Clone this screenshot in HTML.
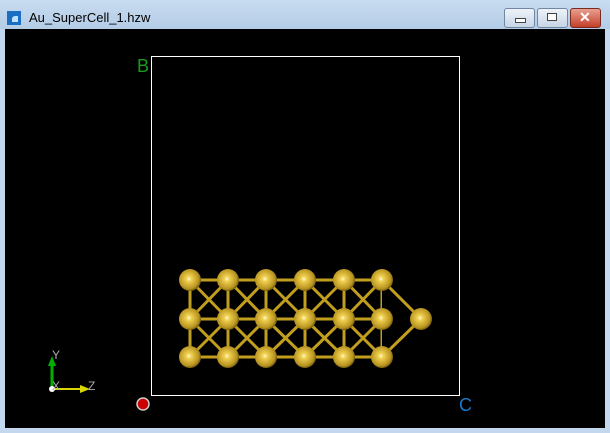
<!DOCTYPE html>
<html><head><style>
html,body{margin:0;padding:0;width:610px;height:433px;overflow:hidden;background:#c3d8ee;font-family:"Liberation Sans",sans-serif}
.tb{position:absolute;left:0;top:0;width:610px;height:29px;background:linear-gradient(#c9dcf0,#b3cce6)}
.btn{position:absolute;top:8px;height:18px;border:1px solid #6f87a3;border-radius:3px;background:linear-gradient(#eef3f9,#c6d5e6)}
</style></head><body>
<div class="tb">
<div style="position:absolute;left:7px;top:11px;width:14px;height:14px;background:#1b6ec2"><div style="position:absolute;left:5px;top:5px;width:6px;height:6px;border-radius:3px 0 0 0;background:#bfe0ff"></div></div>
<div style="position:absolute;left:29px;top:10px;font-size:13px;color:#000">Au_SuperCell_1.hzw</div>
<div class="btn" style="left:504px;width:29px"><div style="position:absolute;left:10px;top:9px;width:9px;height:3px;background:#fff;border:1px solid #444"></div></div>
<div class="btn" style="left:537px;width:29px"><div style="position:absolute;left:9px;top:4px;width:8px;height:6px;border:1px solid #444;background:#fff"></div></div>
<div class="btn" style="left:570px;width:29px;background:linear-gradient(#e9a08f,#c2402a);border-color:#7a2a20"><div style="position:absolute;left:8px;top:0px;color:#fff;font-weight:bold;font-size:14px">✕</div></div>
</div>
<svg style="position:absolute;left:0;top:0" width="610" height="433">
<defs><radialGradient id="g" cx="0.45" cy="0.45" r="0.6"><stop offset="0" stop-color="#fffbd0"/><stop offset="0.2" stop-color="#f0d050"/><stop offset="0.75" stop-color="#b89420"/><stop offset="1" stop-color="#5a4608"/></radialGradient></defs>
<rect x="5" y="29" width="600" height="399" fill="#000"/>
<rect x="151.5" y="56.5" width="308" height="339" fill="none" stroke="#fff" stroke-width="1"/>
<text x="137" y="72" font-size="18" fill="#1a9a1a">B</text>
<text x="459" y="411" font-size="18" fill="#1a78c8">C</text>
<circle cx="143" cy="404" r="6" fill="#c00" stroke="#ccc" stroke-width="1.5"/>
<g stroke="#c29e1e" stroke-width="3">
<line x1="190" y1="280" x2="382" y2="280"/><line x1="190" y1="319" x2="421" y2="319"/><line x1="190" y1="357" x2="382" y2="357"/>
<line x1="190" y1="280" x2="190" y2="357"/><line x1="228" y1="280" x2="228" y2="357"/><line x1="266" y1="280" x2="266" y2="357"/><line x1="305" y1="280" x2="305" y2="357"/><line x1="344" y1="280" x2="344" y2="357"/><line x1="382" y1="280" x2="382" y2="357"/>
<path d="M190 280L228 319M228 280L190 319M228 280L266 319M266 280L228 319M266 280L305 319M305 280L266 319M305 280L344 319M344 280L305 319M344 280L382 319M382 280L344 319M190 319L228 357M228 319L190 357M228 319L266 357M266 319L228 357M266 319L305 357M305 319L266 357M305 319L344 357M344 319L305 357M344 319L382 357M382 319L344 357M382 280L421 319L382 357"/>
</g>
<g fill="url(#g)">
<circle cx="190" cy="280" r="11"/><circle cx="228" cy="280" r="11"/><circle cx="266" cy="280" r="11"/><circle cx="305" cy="280" r="11"/><circle cx="344" cy="280" r="11"/><circle cx="382" cy="280" r="11"/>
<circle cx="190" cy="319" r="11"/><circle cx="228" cy="319" r="11"/><circle cx="266" cy="319" r="11"/><circle cx="305" cy="319" r="11"/><circle cx="344" cy="319" r="11"/><circle cx="382" cy="319" r="11"/><circle cx="421" cy="319" r="11"/>
<circle cx="190" cy="357" r="11"/><circle cx="228" cy="357" r="11"/><circle cx="266" cy="357" r="11"/><circle cx="305" cy="357" r="11"/><circle cx="344" cy="357" r="11"/><circle cx="382" cy="357" r="11"/>
</g>
<line x1="52" y1="389" x2="82" y2="389" stroke="#d8d800" stroke-width="2"/><path d="M80 385L90 389L80 393Z" fill="#d8d800"/>
<line x1="52" y1="389" x2="52" y2="364" stroke="#00b000" stroke-width="3"/><path d="M48 366L52 356L56 366Z" fill="#00b000"/>
<circle cx="52" cy="389" r="3" fill="#fff"/>
<text x="52" y="359" font-size="12" fill="#aaa">Y</text><text x="52" y="390" font-size="12" fill="#aaa">X</text><text x="88" y="390" font-size="12" fill="#aaa">Z</text>
</svg>
</body></html>
